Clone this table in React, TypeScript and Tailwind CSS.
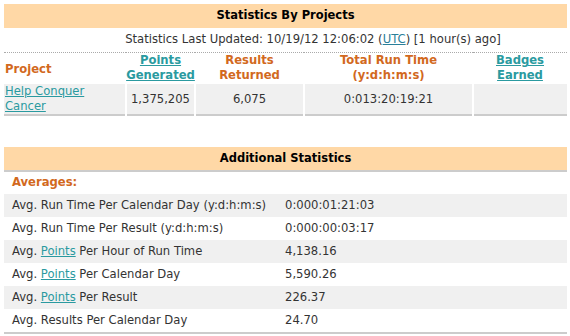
const font = { fontFamily: '"DejaVu Sans", Verdana, sans-serif' };

const link = "text-[#2a9aa0] underline";

const averages: { label: React.ReactNode; value: string }[] = [
  { label: "Avg. Run Time Per Calendar Day (y:d:h:m:s)", value: "0:000:01:21:03" },
  { label: "Avg. Run Time Per Result (y:d:h:m:s)", value: "0:000:00:03:17" },
  { label: <>Avg. <a className={link}>Points</a> Per Hour of Run Time</>, value: "4,138.16" },
  { label: <>Avg. <a className={link}>Points</a> Per Calendar Day</>, value: "5,590.26" },
  { label: <>Avg. <a className={link}>Points</a> Per Result</>, value: "226.37" },
  { label: "Avg. Results Per Calendar Day", value: "24.70" },
];

export default function App() {
  return (
    <div className="bg-white w-[570px] h-[336px] pt-[4px] pl-[4px] text-[11.6px] text-[#333]" style={font}>
      <table className="w-[563px] table-fixed border-collapse">
        <colgroup>
          <col className="w-[122px]" />
          <col className="w-[69px]" />
          <col className="w-[109px]" />
          <col className="w-[169px]" />
          <col />
        </colgroup>
        <tbody>
          <tr>
            <th colSpan={5} className="h-[24px] bg-[#ffd8a6] text-center text-[11.5px] font-bold text-black">
              Statistics By Projects
            </th>
          </tr>
          <tr>
            <td colSpan={5} className="h-[24px] pl-[55px] text-center border-b border-dotted border-[#aaa]">
              Statistics Last Updated: 10/19/12 12:06:02 (<a className="text-[#2a7f9a] underline">UTC</a>) [1 hour(s) ago]
            </td>
          </tr>
          <tr className="h-[32px] font-bold text-[#d2691e] leading-[15px]">
            <th className="text-left pl-[1px] pt-[2px]">Project</th>
            <th className="text-center"><a className={link}>Points Generated</a></th>
            <th className="text-center">Results<br />Returned</th>
            <th className="text-center">Total Run Time<br />(y:d:h:m:s)</th>
            <th className="text-center"><a className={link}>Badges<br />Earned</a></th>
          </tr>
          <tr className="h-[31px] bg-[#f0f0f0] border-b-2 border-[#cccccc] leading-[15px]">
            <td className="pl-[1px] border-r-2 border-white"><a className={link}>Help Conquer<br />Cancer</a></td>
            <td className="text-center border-r-2 border-white">1,375,205</td>
            <td className="text-center border-r-2 border-white">6,075</td>
            <td className="text-center border-r-2 border-white">0:013:20:19:21</td>
            <td></td>
          </tr>
        </tbody>
      </table>

      <table className="w-[563px] border-collapse mt-[31px]">
        <tbody>
          <tr className="border-b-2 border-[#cccccc]">
            <th colSpan={2} className="h-[24px] bg-[#ffd8a6] text-center text-[11.5px] font-bold text-black">
              Additional Statistics
            </th>
          </tr>
          <tr>
            <td colSpan={2} className="h-[23px] pl-[8px] font-bold text-[#d2691e]">Averages:</td>
          </tr>
          {averages.map((row, i) => (
            <tr key={i} className={i % 2 === 0 ? "h-[23px] bg-[#f0f0f0]" : "h-[23px] bg-white"}>
              <td className="w-[277px] pl-[8px]">{row.label}</td>
              <td className="pl-[4px]">{row.value}</td>
            </tr>
          ))}
          <tr>
            <td colSpan={2} className="h-[2px] bg-[#cccccc] p-0"></td>
          </tr>
        </tbody>
      </table>
    </div>
  );
}
